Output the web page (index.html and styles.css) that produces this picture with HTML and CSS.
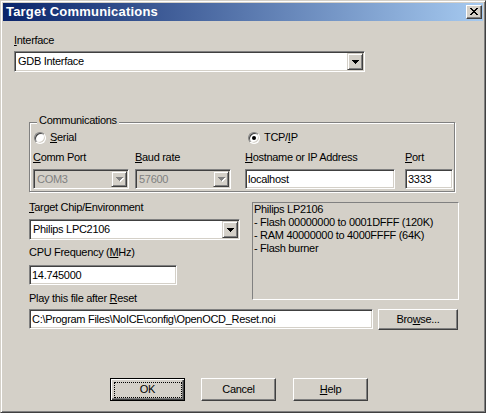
FILE: index.html
```html
<!DOCTYPE html>
<html>
<head>
<meta charset="utf-8">
<title>Target Communications</title>
<link rel="stylesheet" href="styles.css">
</head>
<body>
<div class="window">
  <div class="titlebar">
    <span class="title">Target Communications</span>
    <span class="close">
      <svg width="8" height="7" viewBox="0 0 8 7" shape-rendering="crispEdges">
        <rect x="0" y="0" width="2" height="1"/><rect x="6" y="0" width="2" height="1"/>
        <rect x="1" y="1" width="2" height="1"/><rect x="5" y="1" width="2" height="1"/>
        <rect x="2" y="2" width="4" height="1"/>
        <rect x="3" y="3" width="2" height="1"/>
        <rect x="2" y="4" width="4" height="1"/>
        <rect x="1" y="5" width="2" height="1"/><rect x="5" y="5" width="2" height="1"/>
        <rect x="0" y="6" width="2" height="1"/><rect x="6" y="6" width="2" height="1"/>
      </svg>
    </span>
  </div>
  <div class="client">
    <div class="label l-iface"><u>I</u>nterface</div>
    <div class="combo c-iface">
      <span class="val">GDB Interface</span>
      <span class="dd"><svg width="7" height="4" viewBox="0 0 7 4" shape-rendering="crispEdges"><rect x="0" y="0" width="7" height="1"/><rect x="1" y="1" width="5" height="1"/><rect x="2" y="2" width="3" height="1"/><rect x="3" y="3" width="1" height="1"/></svg></span>
    </div>

    <div class="group">
      <span class="legend">Communications</span>
      <div class="radio-row">
        <div class="radio-item r-serial"><span class="radio"></span><span class="rtext"><u>S</u>erial</span></div>
        <div class="radio-item r-tcp"><span class="radio checked"><span class="dot"></span></span><span class="rtext">TCP/<u>I</u>P</span></div>
      </div>
      <div class="grow g-labels">
        <div class="label"><u>C</u>omm Port</div>
        <div class="label"><u>B</u>aud rate</div>
        <div class="label"><u>H</u>ostname or IP Address</div>
        <div class="label"><u>P</u>ort</div>
      </div>
      <div class="grow g-controls">
        <div class="combo disabled c-port">
          <span class="val">COM3</span>
          <span class="dd"><svg width="8" height="5" viewBox="0 0 8 5" shape-rendering="crispEdges"><g fill="#fff"><rect x="1" y="1" width="7" height="1"/><rect x="2" y="2" width="5" height="1"/><rect x="3" y="3" width="3" height="1"/><rect x="4" y="4" width="1" height="1"/></g><g fill="#808080"><rect x="0" y="0" width="7" height="1"/><rect x="1" y="1" width="5" height="1"/><rect x="2" y="2" width="3" height="1"/><rect x="3" y="3" width="1" height="1"/></g></svg></span>
        </div>
        <div class="combo disabled c-baud">
          <span class="val">57600</span>
          <span class="dd"><svg width="8" height="5" viewBox="0 0 8 5" shape-rendering="crispEdges"><g fill="#fff"><rect x="1" y="1" width="7" height="1"/><rect x="2" y="2" width="5" height="1"/><rect x="3" y="3" width="3" height="1"/><rect x="4" y="4" width="1" height="1"/></g><g fill="#808080"><rect x="0" y="0" width="7" height="1"/><rect x="1" y="1" width="5" height="1"/><rect x="2" y="2" width="3" height="1"/><rect x="3" y="3" width="1" height="1"/></g></svg></span>
        </div>
        <div class="edit e-host">localhost</div>
        <div class="edit e-port">3333</div>
      </div>
    </div>

    <div class="lower">
      <div class="left-col">
        <div class="label"><u>T</u>arget Chip/Environment</div>
        <div class="combo c-chip">
          <span class="val">Philips LPC2106</span>
          <span class="dd"><svg width="7" height="4" viewBox="0 0 7 4" shape-rendering="crispEdges"><rect x="0" y="0" width="7" height="1"/><rect x="1" y="1" width="5" height="1"/><rect x="2" y="2" width="3" height="1"/><rect x="3" y="3" width="1" height="1"/></svg></span>
        </div>
        <div class="label l-cpu">CPU Frequency (<u>M</u>Hz)</div>
        <div class="edit e-cpu">14.745000</div>
        <div class="label l-play">Play this file after <u>R</u>eset</div>
      </div>
      <div class="info">
        <div>Philips LP2106</div>
        <div>- Flash 00000000 to 0001DFFF (120K)</div>
        <div>- RAM 40000000 to 4000FFFF (64K)</div>
        <div>- Flash burner</div>
      </div>
    </div>

    <div class="file-row">
      <div class="edit e-file">C:\Program Files\NoICE\config\OpenOCD_Reset.noi</div>
      <div class="btn b-browse">Bro<u>w</u>se...</div>
    </div>

    <div class="buttons">
      <div class="btn default">OK</div>
      <div class="btn b-cancel">Cancel</div>
      <div class="btn b-help"><u>H</u>elp</div>
    </div>
  </div>
</div>
</body>
</html>
```
FILE: styles.css
```css
html, body {
  margin: 0;
  padding: 0;
  background: #d4d0c8;
}

.window {
  width: 486px;
  height: 413px;
  box-sizing: border-box;
  border: 1px solid;
  border-color: #d4d0c8 #404040 #404040 #d4d0c8;
  box-shadow: inset 1px 1px #fff, inset -1px -1px #808080;
  padding: 2px;
  background: #d4d0c8;
  font-family: "Liberation Sans", Arial, sans-serif;
  font-size: 11px;
  letter-spacing: -0.3px;
  color: #000;
  overflow: hidden;
}

/* title bar */
.titlebar {
  height: 18px;
  display: flex;
  align-items: center;
  background: linear-gradient(to right, #0a246a, #a6caf0);
  padding: 0 1px 0 3px;
}
.title {
  flex: 1;
  color: #fff;
  font-weight: bold;
  font-size: 13px;
  letter-spacing: 0.2px;
  line-height: 18px;
  white-space: nowrap;
}
.close {
  width: 16px;
  height: 14px;
  box-sizing: border-box;
  background: #d4d0c8;
  border: 1px solid;
  border-color: #fff #404040 #404040 #fff;
  box-shadow: inset -1px -1px #808080;
  display: flex;
  align-items: center;
  justify-content: center;
  padding-bottom: 1px;
}
.close svg { display: block; fill: #000; }

/* client */
.client {
  padding-top: 13px;
}
.label {
  line-height: 13px;
  white-space: nowrap;
}
u { text-decoration: underline; text-underline-offset: 1px; }

.l-iface { margin-left: 11px; }

/* combo & edit */
.combo, .edit {
  box-sizing: border-box;
  background: #fff;
  border: 1px solid;
  border-color: #808080 #fff #fff #808080;
  box-shadow: inset 1px 1px #404040, inset -1px -1px #d4d0c8;
  white-space: nowrap;
  overflow: hidden;
}
.combo {
  display: flex;
  align-items: stretch;
  padding: 1px;
}
.combo .val {
  flex: 1;
  padding-left: 2px;
  display: flex;
  align-items: center;
  line-height: 13px;
}
.combo .dd {
  width: 16px;
  flex: none;
  box-sizing: border-box;
  background: #d4d0c8;
  border: 1px solid;
  border-color: #d4d0c8 #404040 #404040 #d4d0c8;
  box-shadow: inset 1px 1px #fff, inset -1px -1px #808080;
  display: flex;
  align-items: center;
  justify-content: center;
}
.combo .dd svg { display: block; fill: #000; margin-left: 1px; }
.combo.disabled { background: #d4d0c8; }
.combo.disabled .val { color: #808080; }
.combo.disabled .dd svg { margin-left: 2px; margin-top: 1px; }

.edit {
  height: 20px;
  padding: 0 2px;
  display: flex;
  align-items: center;
  line-height: 13px;
}

.c-iface {
  margin: 4px 0 0 11px;
  width: 351px;
  height: 21px;
}

/* group box */
.group {
  position: relative;
  margin: 50px 0 0 26px;
  width: 426px;
  height: 70px;
  box-sizing: border-box;
  border: 1px solid #808080;
  box-shadow: 1px 1px 0 #fff, inset 1px 1px 0 #fff;
  padding: 8px 0 0 3px;
}
.legend {
  position: absolute;
  top: -9px;
  left: 7px;
  padding: 0 2px;
  line-height: 13px;
  background: #d4d0c8;
}
.radio-row {
  display: grid;
  grid-template-columns: 212px 1fr;
  height: 13px;
}
.radio-item {
  display: flex;
  align-items: center;
  line-height: 13px;
}
.r-serial { margin-left: 1px; }
.r-tcp { margin-left: 3px; }
.rtext { margin-left: 4px; }
.radio {
  width: 12px;
  height: 12px;
  box-sizing: border-box;
  border-radius: 50%;
  border: 1px solid;
  border-color: #808080 #fff #fff #808080;
  box-shadow: inset 1px 1px #404040, inset -1px -1px #d4d0c8;
  background: #fff;
  display: flex;
  align-items: center;
  justify-content: center;
  margin-top: 1px;
}
.radio .dot {
  width: 4px;
  height: 4px;
  border-radius: 50%;
  background: #000;
}
.grow {
  display: grid;
  grid-template-columns: 102px 110px 160px 48px;
}
.g-labels { margin-top: 7px; }
.g-controls { margin-top: 5px; }
.c-port, .c-baud { width: 96px; height: 20px; }
.e-host { width: 150px; }
.e-port { width: 48px; }

/* lower section */
.lower {
  display: flex;
  margin: 9px 0 0 26px;
}
.left-col {
  width: 223px;
}
.c-chip {
  margin-top: 5px;
  width: 211px;
  height: 21px;
}
.l-cpu { margin-top: 6px; }
.e-cpu { margin-top: 6px; width: 148px; }
.l-play { margin-top: 7px; }

.info {
  margin-top: 1px;
  width: 207px;
  height: 98px;
  box-sizing: border-box;
  border: 1px solid;
  border-color: #808080 #fff #fff #808080;
  padding: 0 0 0 1px;
  line-height: 13px;
  white-space: nowrap;
}

.file-row {
  display: flex;
  gap: 5px;
  margin: 4px 0 0 26px;
}
.e-file { width: 344px; }

/* buttons */
.btn {
  position: relative;
  box-sizing: border-box;
  width: 75px;
  height: 23px;
  background: #d4d0c8;
  border: 1px solid;
  border-color: #fff #404040 #404040 #fff;
  box-shadow: inset -1px -1px #808080;
  display: flex;
  align-items: center;
  justify-content: center;
  line-height: 13px;
  white-space: nowrap;
}
.b-browse {
  width: 80px;
  height: 21px;
}
.btn.default {
  border-color: #000;
  box-shadow: inset 1px 1px #fff, inset -1px -1px #404040, inset -2px -2px #808080;
}
.btn.default::after {
  content: "";
  position: absolute;
  left: 3px;
  top: 3px;
  right: 2px;
  bottom: 2px;
  border: 1px dotted #000;
}
.buttons {
  display: flex;
  margin: 48px 0 0 107px;
}
.b-cancel { margin-left: 16px; }
.b-help { margin-left: 17px; }
```
